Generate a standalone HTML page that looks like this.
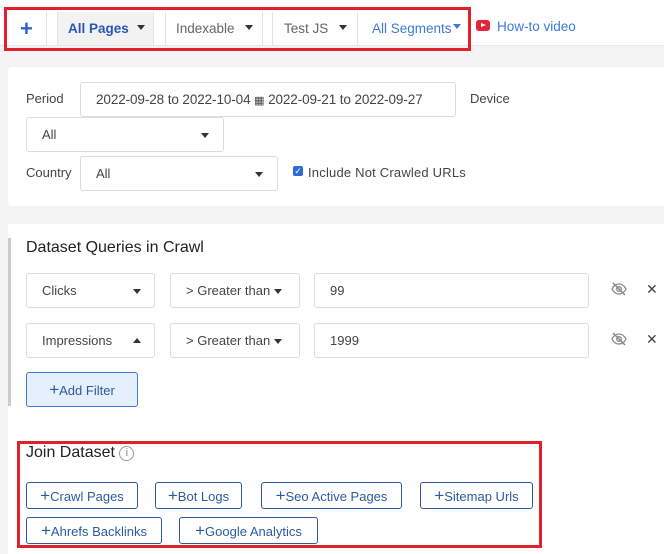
<!DOCTYPE html>
<html><head><meta charset="utf-8"><style>
*{box-sizing:border-box;margin:0;padding:0}
body{width:664px;height:548px;background:#f4f4f4;font-family:"Liberation Sans",sans-serif;position:relative;overflow:hidden;color:#333}
.a{position:absolute}
.top{left:0;top:0;width:664px;height:46px;background:#fff;border-bottom:1px solid #e6e6e6}
.sep{position:absolute;top:12px;width:1px;height:33px;background:#e3e3e3}
.tab{position:absolute;top:12px;height:33px;font-size:13.5px;line-height:33px;color:#666;white-space:nowrap}
.car{display:inline-block;width:0;height:0;border-left:4px solid transparent;border-right:4px solid transparent;border-top:5px solid #333;vertical-align:middle}
.caru{display:inline-block;width:0;height:0;border-left:4px solid transparent;border-right:4px solid transparent;border-bottom:5px solid #333;vertical-align:middle}
.box{position:absolute;background:#fff;border:1px solid #dcdcdc;border-radius:3px;font-size:13px;color:#444;white-space:nowrap}
.lbl{position:absolute;font-size:13px;color:#444;white-space:nowrap}
.btn{position:absolute;border:1px solid #2c5aa0;border-radius:3px;background:#fff;color:#2c5aa0;font-size:13px;height:27px;line-height:25px;text-align:center;white-space:nowrap}
.red{position:absolute;border:3px solid #e0202a}
</style></head><body>
<div class="a top"></div>
<div class="tab" style="left:20px;color:#2d63c8;font-size:22px;font-weight:bold;line-height:33px">+</div>
<div class="sep" style="left:46px"></div>
<div class="a" style="left:57px;top:12px;width:97px;height:33px;background:#f2f2f2;border-left:1px solid #e3e3e3;border-right:1px solid #e3e3e3"></div>
<div class="tab" style="left:68px;color:#2d55b8;font-weight:bold">All Pages</div>
<span class="car a" style="left:137px;top:25px"></span>
<div class="sep" style="left:165px"></div>
<div class="tab" style="left:176px">Indexable</div>
<span class="car a" style="left:245px;top:25px"></span>
<div class="sep" style="left:262px"></div>
<div class="sep" style="left:272px"></div>
<div class="tab" style="left:284px">Test JS</div>
<span class="car a" style="left:339px;top:25px"></span>
<div class="sep" style="left:357px"></div>
<div class="tab" style="left:372px;color:#3e78d8">All Segments</div>
<span class="car a" style="left:453px;top:24px;border-top-color:#3e78d8"></span>
<div class="a" style="left:476px;top:20px;width:14px;height:11px;background:#e3243b;border-radius:3px"><div style="position:absolute;left:5px;top:3px;border-left:5px solid #fff;border-top:2.5px solid transparent;border-bottom:2.5px solid transparent"></div></div>
<div class="tab" style="left:497px;top:10px;color:#3e78d8">How-to video</div>
<div class="red" style="left:4px;top:7px;width:467px;height:44px"></div>

<div class="a" style="left:8px;top:67px;width:660px;height:139px;background:#fff;border-radius:4px"></div>
<div class="lbl" style="left:26px;top:91px">Period</div>
<div class="box" style="left:80px;top:82px;width:376px;height:35px;line-height:33px;padding-left:15px;font-size:13.5px;letter-spacing:-0.1px">2022-09-28 to 2022-10-04 <span style="font-size:11px">&#x25A6;</span> 2022-09-21 to 2022-09-27</div>
<div class="lbl" style="left:470px;top:91px">Device</div>
<div class="box" style="left:26px;top:117px;width:198px;height:35px;line-height:33px;padding-left:15px">All<span class="car" style="position:absolute;left:174px;top:15px"></span></div>
<div class="lbl" style="left:26px;top:165px">Country</div>
<div class="box" style="left:80px;top:156px;width:198px;height:35px;line-height:33px;padding-left:15px">All<span class="car" style="position:absolute;left:174px;top:15px"></span></div>
<div class="a" style="left:293px;top:166px;width:10px;height:10px;background:#2d6bd8;border-radius:2px;color:#fff;font-size:9px;line-height:10px;text-align:center">✓</div>
<div class="lbl" style="left:308px;top:165px;letter-spacing:0.2px">Include Not Crawled URLs</div>

<div class="a" style="left:8px;top:224px;width:660px;height:330px;background:#fff"></div>
<div class="a" style="left:8px;top:238px;width:3px;height:168px;background:#ccc"></div>
<div class="lbl" style="left:26px;top:239px;font-size:16px;color:#222">Dataset Queries in Crawl</div>
<div class="box" style="left:26px;top:273px;width:129px;height:35px;line-height:33px;padding-left:15px">Clicks<span class="car" style="position:absolute;left:106px;top:15px"></span></div>
<div class="box" style="left:170px;top:273px;width:130px;height:35px;line-height:33px;padding-left:15px">&gt; Greater than <span class="car"></span></div>
<div class="box" style="left:314px;top:273px;width:275px;height:35px;line-height:33px;padding-left:15px">99</div>
<div class="box" style="left:26px;top:323px;width:129px;height:35px;line-height:33px;padding-left:15px">Impressions<span class="caru" style="position:absolute;left:106px;top:14px"></span></div>
<div class="box" style="left:170px;top:323px;width:130px;height:35px;line-height:33px;padding-left:15px">&gt; Greater than <span class="car"></span></div>
<div class="box" style="left:314px;top:323px;width:275px;height:35px;line-height:33px;padding-left:15px">1999</div>
<svg class="a" style="left:611px;top:282px" width="16" height="14" viewBox="0 0 16 14"><path d="M1 7C3 3 6 2 8 2s5 1 7 5c-2 4-5 5-7 5S3 11 1 7z" fill="none" stroke="#888" stroke-width="1.3"/><circle cx="8" cy="7" r="2.3" fill="none" stroke="#888" stroke-width="1.3"/><path d="M2 1l12 12" stroke="#888" stroke-width="1.5"/></svg>
<svg class="a" style="left:611px;top:332px" width="16" height="14" viewBox="0 0 16 14"><path d="M1 7C3 3 6 2 8 2s5 1 7 5c-2 4-5 5-7 5S3 11 1 7z" fill="none" stroke="#888" stroke-width="1.3"/><circle cx="8" cy="7" r="2.3" fill="none" stroke="#888" stroke-width="1.3"/><path d="M2 1l12 12" stroke="#888" stroke-width="1.5"/></svg>
<div class="lbl" style="left:646px;top:281px;font-size:14px;color:#444">✕</div>
<div class="lbl" style="left:646px;top:331px;font-size:14px;color:#444">✕</div>
<div class="btn" style="left:26px;top:372px;width:112px;height:35px;line-height:33px;background:#e6effd;border-color:#3e78d8;color:#2c5aa0"><span style="font-size:17px">+</span>Add Filter</div>

<div class="lbl" style="left:26px;top:444px;font-size:16px;color:#222">Join Dataset <span style="display:inline-block;width:15px;height:15px;border:1px solid #999;border-radius:50%;font-size:11px;line-height:13px;text-align:center;color:#888;vertical-align:1px">i</span></div>
<div class="btn" style="left:26px;top:482px;width:112px"><span style="font-size:17px">+</span>Crawl Pages</div>
<div class="btn" style="left:155px;top:482px;width:87px"><span style="font-size:17px">+</span>Bot Logs</div>
<div class="btn" style="left:261px;top:482px;width:141px"><span style="font-size:17px">+</span>Seo Active Pages</div>
<div class="btn" style="left:420px;top:482px;width:113px"><span style="font-size:17px">+</span>Sitemap Urls</div>
<div class="btn" style="left:26px;top:517px;width:136px"><span style="font-size:17px">+</span>Ahrefs Backlinks</div>
<div class="btn" style="left:179px;top:517px;width:139px"><span style="font-size:17px">+</span>Google Analytics</div>
<div class="red" style="left:17px;top:441px;width:525px;height:107px"></div>
</body></html>
